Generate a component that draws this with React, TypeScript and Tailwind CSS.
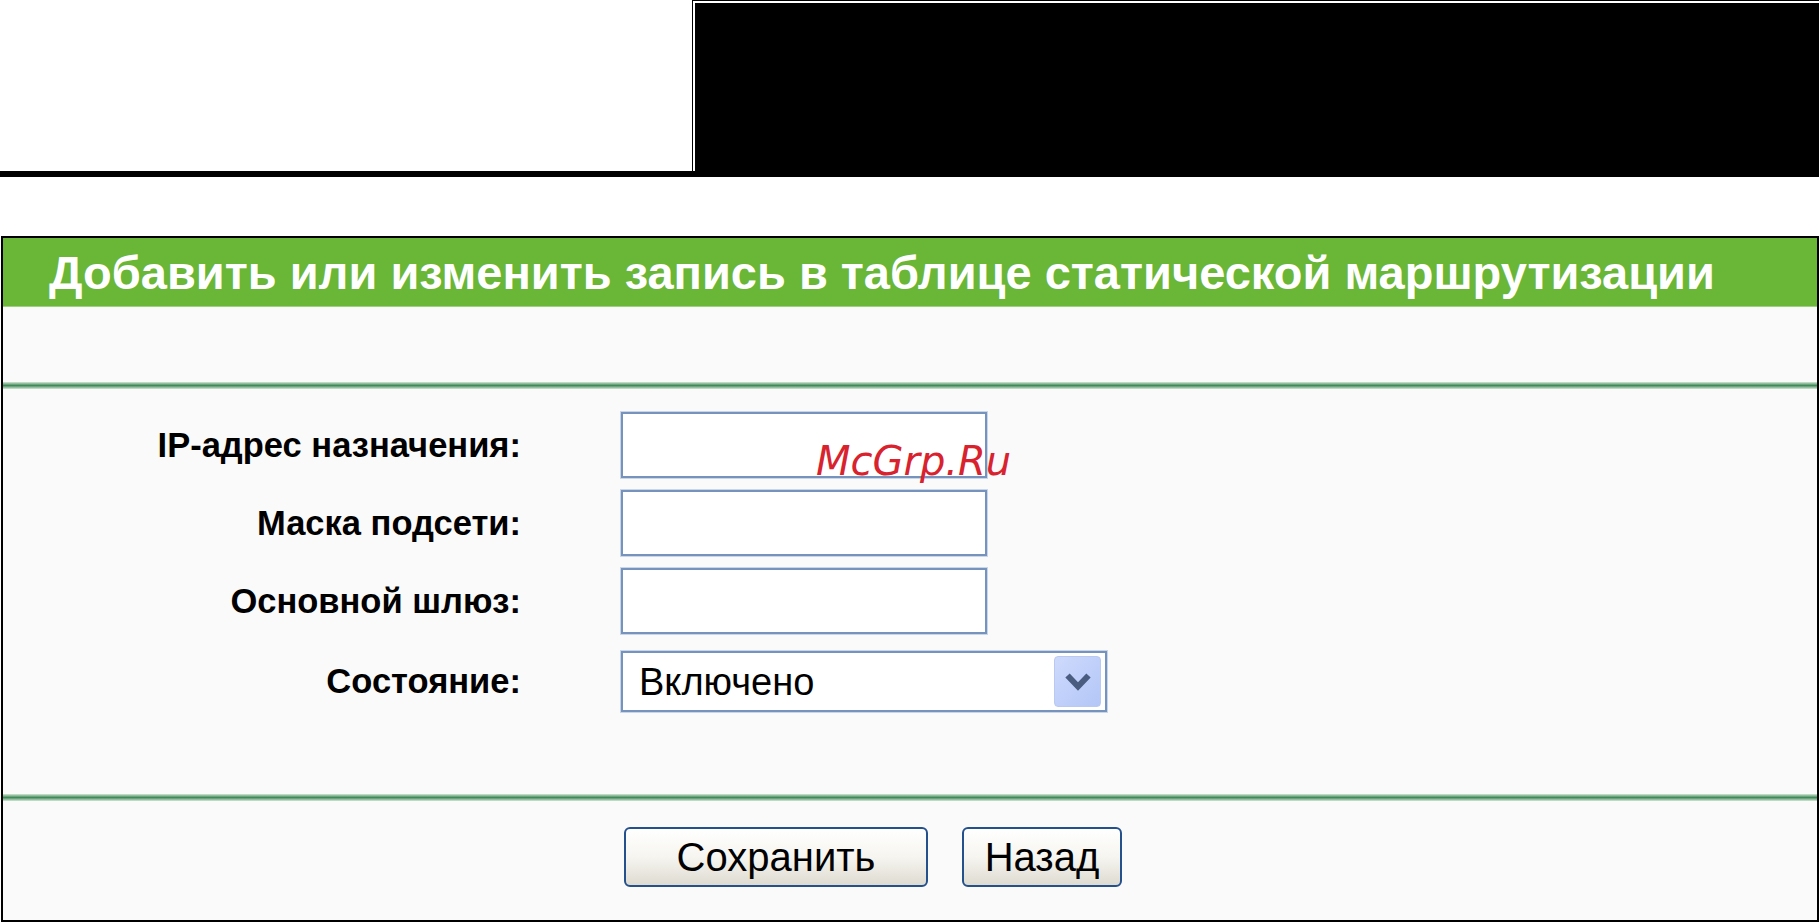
import React from "react";

function Row({ label, children, className = "" }: { label: string; children: React.ReactNode; className?: string }) {
  return (
    <div className={"flex items-center " + className}>
      <div className="w-[518px] text-right font-bold text-[34.5px] leading-none text-black">{label}</div>
      <div className="ml-[100px] flex items-center">{children}</div>
    </div>
  );
}

function TextBox() {
  return (
    <input
      type="text"
      readOnly
      className="w-[366px] h-[66px] bg-white border-2 border-[#7593bd] shadow-[0_0_0_1px_#c9d6e8] outline-none"
    />
  );
}

function Divider() {
  return <div className="h-[7px] bg-gradient-to-b from-[#d3e6d7] via-[#3f8a5b] to-[#d3e6d7]" />;
}

function Btn({ children, w }: { children: React.ReactNode; w: string }) {
  return (
    <button
      type="button"
      className={
        w +
        " h-[60px] rounded-[6px] border-2 border-[#24508c] bg-gradient-to-b from-white via-[#f6f5f0] to-[#dedbd1] text-black text-[40px] leading-none flex items-center justify-center"
      }
    >
      {children}
    </button>
  );
}

export default function App() {
  return (
    <div className="relative w-[1819px] h-[922px] bg-white overflow-hidden font-['Liberation_Sans',Arial,sans-serif]">
      {/* top area */}
      <div className="flex h-[171px]">
        <div className="w-[692px] bg-white" />
        <div className="flex-1 flex flex-col bg-black pt-px pl-px">
          <div className="flex-1 border-t-2 border-l-2 border-white bg-black" />
        </div>
      </div>
      <div className="h-[6px] bg-black" />
      <div className="h-[59px]" />

      {/* main panel */}
      <div className="ml-px h-[686px] border-2 border-black bg-[#fafafa] flex flex-col">
        <div className="h-[69px] bg-[#6ab636] border-b border-[#9fd07f] pl-[46px] flex items-center">
          <h1 className="text-white font-bold text-[47px] leading-[69px] whitespace-nowrap">
            Добавить или изменить запись в таблице статической маршрутизации
          </h1>
        </div>
        <div className="h-[75px]" />
        <Divider />

        <div className="pt-[23px] flex flex-col">
          <Row label="IP-адрес назначения:" className="h-[66px]">
            <TextBox />
          </Row>
          <Row label="Маска подсети:" className="h-[66px] mt-3">
            <TextBox />
          </Row>
          <Row label="Основной шлюз:" className="h-[66px] mt-3">
            <TextBox />
          </Row>
          <Row label="Состояние:" className="h-[61px] mt-[17px]">
            <div className="w-[486px] h-[61px] bg-white border-2 border-[#7593bd] shadow-[0_0_0_1px_#c9d6e8] flex items-center justify-between pl-[16px] pr-[4px]">
              <span className="text-[38px] leading-none text-black">Включено</span>
              <div className="w-[47px] h-[51px] rounded-[4px] bg-gradient-to-br from-[#cfdafc] via-[#c0d0fa] to-[#b3c6f6] border border-[#b9c9ef] flex items-center justify-center">
                <svg width="28" height="19" viewBox="0 0 28 19" fill="none">
                  <path d="M3.5 3.5 L14 14.5 L24.5 3.5" stroke="#4a5c80" strokeWidth="6" strokeLinejoin="miter" />
                </svg>
              </div>
            </div>
          </Row>
        </div>

        <div className="h-[82px]" />
        <Divider />

        <div className="pt-[26px] pl-[621px] flex gap-[34px]">
          <Btn w="w-[304px]">Сохранить</Btn>
          <Btn w="w-[160px]">Назад</Btn>
        </div>
      </div>

      {/* watermark */}
      <div className="absolute left-[816px] top-[441px] text-[40px] leading-none italic text-[#d8232f] font-['DejaVu_Sans',Verdana,sans-serif] pointer-events-none">
        McGrp.Ru
      </div>
    </div>
  );
}
